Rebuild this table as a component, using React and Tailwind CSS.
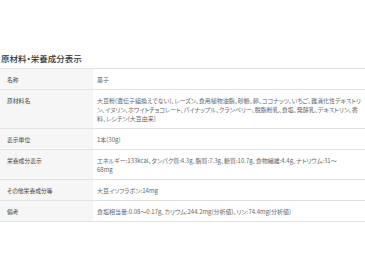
import React from 'react';

const rows = [
  { label: '名称', lines: ['菓子'] },
  {
    label: '原材料名',
    lines: [
      '大豆粉(遺伝子組換えでない)、レーズン、食用植物油脂、砂糖、卵、ココナッツ、いちご、難消化性デキストリ',
      'ン、イヌリン、ホワイトチョコレート、パイナップル、クランベリー、脱脂粉乳、食塩、発酵乳、デキストリン、香',
      '料、レシチン(大豆由来)',
    ],
  },
  { label: '表示単位', lines: ['1本(30g)'] },
  {
    label: '栄養成分表示',
    lines: [
      'エネルギー:133kcal、タンパク質:4.3g、脂質:7.3g、糖質:10.7g、食物繊維:4.4g、ナトリウム:31～',
      '68mg',
    ],
  },
  { label: 'その他栄養成分等', lines: ['大豆イソフラボン:14mg'] },
  { label: '備考', lines: ['食塩相当量:0.08～0.17g、カリウム:244.2mg(分析値)、リン:74.4mg(分析値)'] },
];

export default function App() {
  return (
    <div
      className="w-[365px] h-[273px] bg-white pt-[52px] [font-feature-settings:'palt']"
      style={{ fontFamily: '"Noto Sans CJK JP", "Noto Sans", sans-serif' }}
    >
      <h2 className="pl-[1px] text-[8.5px] leading-[12px] font-medium text-[#333] mb-[4px]">原材料・栄養成分表示</h2>
      <div className="border-t border-[#e3e3e3]">
        {rows.map((r) => (
          <div key={r.label} className="flex border-b border-[#e3e3e3]">
            <div className="w-[93px] shrink-0 bg-[#f6f6f6] pl-[7px] py-[5.5px] text-[5.8px] leading-[9px] text-[#444]">
              {r.label}
            </div>
            <div className="flex-1 pl-[4px] pr-[6px] py-[5.5px] text-[6px] leading-[9px] text-[#666]">
              {r.lines.map((l, i) => (
                <div key={i} className="whitespace-nowrap">{l}</div>
              ))}
            </div>
          </div>
        ))}
      </div>
    </div>
  );
}
